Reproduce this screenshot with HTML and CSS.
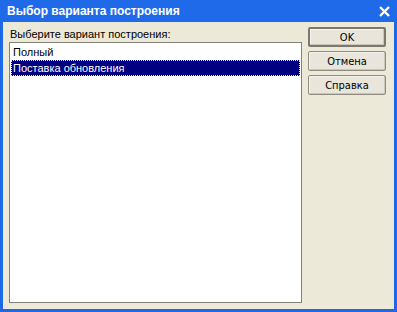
FILE: index.html
```html
<!DOCTYPE html>
<html lang="ru">
<head>
<meta charset="utf-8">
<link rel="stylesheet" href="styles.css">
</head>
<body>
<div class="window">
  <div class="titlebar">
    <span class="title">Выбор варианта построения</span>
    <span class="close">
      <svg width="11" height="11" viewBox="0 0 11 11"><path d="M1 1 L10 10 M10 1 L1 10" stroke="#fff" stroke-width="2.4" fill="none"/></svg>
    </span>
  </div>
  <div class="client">
    <div class="left">
      <div class="label">Выберите вариант построения:</div>
      <div class="listbox">
        <div class="item">Полный</div>
        <div class="item selected">Поставка обновления</div>
      </div>
    </div>
    <div class="buttons">
      <button class="btn default">OK</button>
      <button class="btn">Отмена</button>
      <button class="btn">Справка</button>
    </div>
  </div>
</div>
</body>
</html>
```
FILE: styles.css
```css
html, body {
  margin: 0;
  padding: 0;
  background: #ECE9D8;
}
.window {
  width: 397px;
  height: 312px;
  box-sizing: border-box;
  display: flex;
  flex-direction: column;
  background: #ECE9D8;
  border-left: 3px solid #1E68E6;
  border-right: 3px solid #1E68E6;
  border-bottom: 3px solid #1E68E6;
  font-family: "Liberation Sans", sans-serif;
}
.titlebar {
  height: 22px;
  margin: 0 -3px;
  padding: 0 7px 0 7px;
  background: #1F6AE8;
  display: flex;
  align-items: center;
  justify-content: space-between;
  flex: none;
}
.title {
  color: #fff;
  font-family: "Liberation Sans", sans-serif;
  font-weight: bold;
  font-size: 12px;
  letter-spacing: 0;
}
.close {
  display: flex;
}
.client {
  flex: 1;
  display: flex;
  padding: 5px 8px 6px 6px;
  gap: 6px;
  min-height: 0;
}
.left {
  flex: 1;
  display: flex;
  flex-direction: column;
}
.label {
  font-family: "Liberation Sans", sans-serif;
  font-size: 11px;
  line-height: 13px;
  margin: 1px 0 0 1px;
  height: 13px;
  color: #000;
}
.listbox {
  flex: 1;
  margin-top: 1px;
  background: #fff;
  border: 1px solid #828177;
  padding: 1px 1px 0;
}
.item {
  font-family: "Liberation Sans", sans-serif;
  font-size: 11px;
  height: 16px;
  line-height: 16px;
  padding-left: 2px;
  color: #000;
  box-sizing: border-box;
}
.selected {
  background: #000080;
  color: #fff;
  outline: 1px dotted #FFFF00;
  outline-offset: -1px;
}
.buttons {
  width: 78px;
  display: flex;
  flex-direction: column;
  gap: 4px;
}
.btn {
  height: 20px;
  width: 78px;
  box-sizing: border-box;
  background: #E9E5DB;
  border: 1px solid #8F8C82;
  border-radius: 2px;
  box-shadow: inset -1px -1px 0 #C9C5BA, inset 1px 1px 0 #F6F4EE;
  font-family: "DejaVu Sans Condensed", "DejaVu Sans", sans-serif;
  font-size: 11px;
  color: #000;
  padding: 0;
}
.btn.default {
  border: 2px solid #7C786E;
}
```
